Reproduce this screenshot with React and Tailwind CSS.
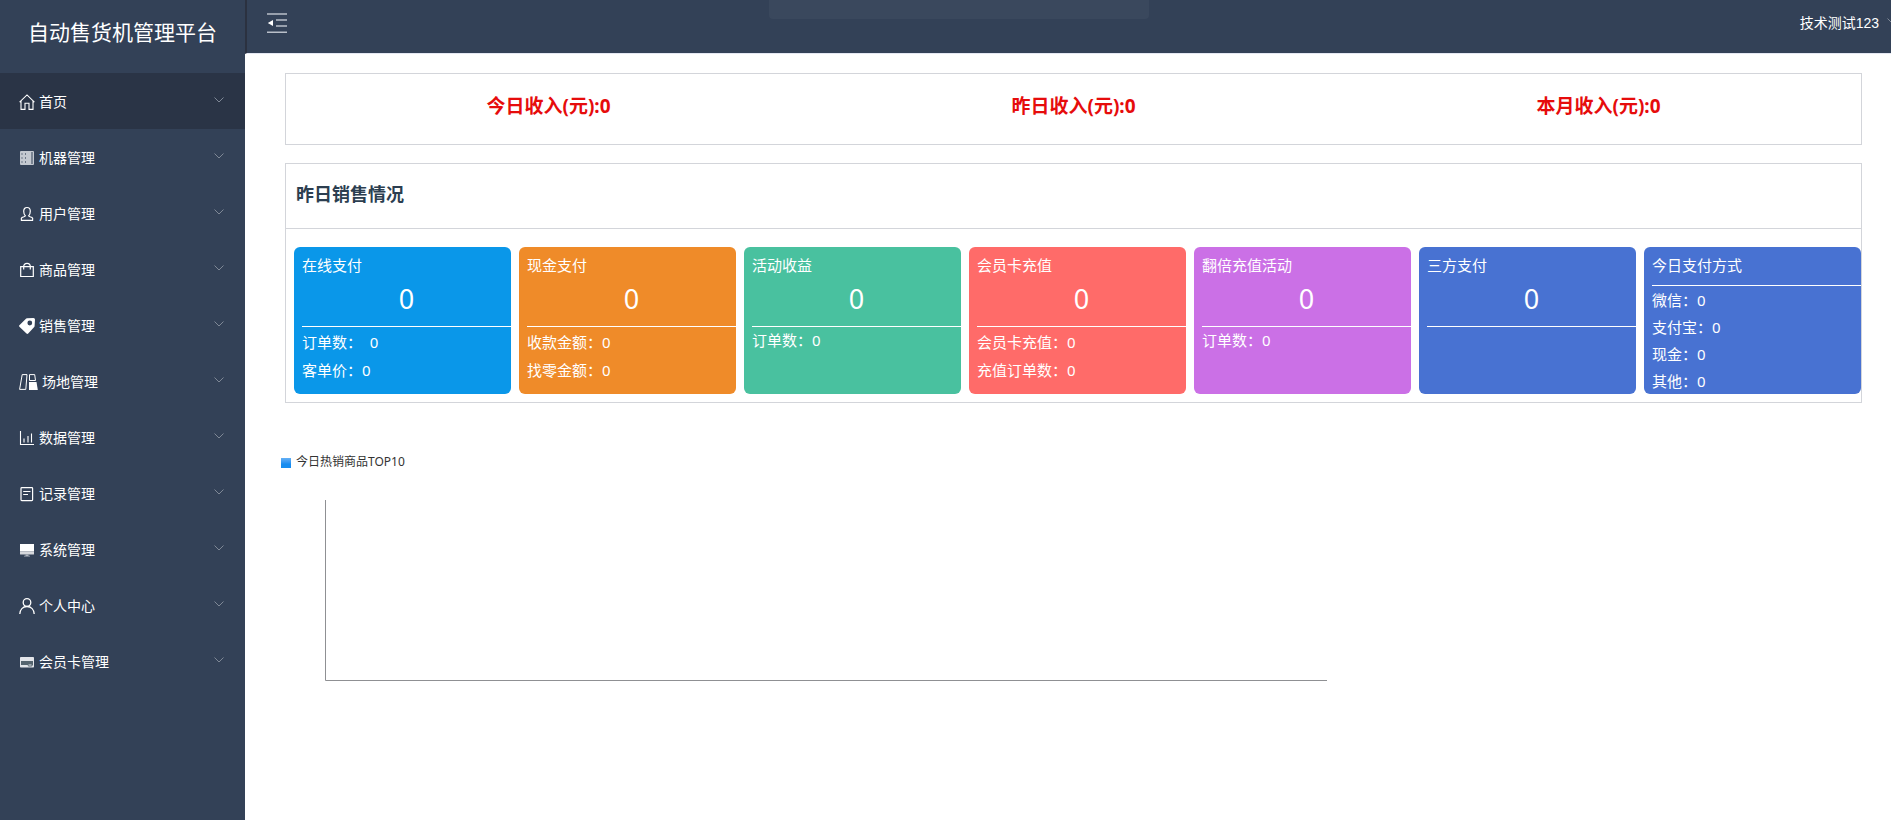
const svgProps = { viewBox: "0 0 16 16", width: 16, height: 16, fill: "none", stroke: "currentColor", "aria-hidden": true, className: "h-4 w-4 shrink-0" };

function HomeIcon() {
  return (
    <svg {...svgProps} strokeWidth="1.1">
      <path d="M.6 8.2 8 .9l7.4 7.3M2 7v8.4h4V9.2h4v6.2h4V7" />
    </svg>
  );
}
function MachineIcon() {
  return (
    <svg {...svgProps} stroke="none">
      <rect x="1" y="1" width="14" height="14" rx="1" fill="#c3c8d0" />
      <path d="M12.5 2h1v12h-1z" fill="#334157" />
      <path d="M2.5 3h1v2h-1zM2.5 7h1v2h-1zM2.5 11h1v2h-1zM6 3h1v2H6zM6 7h1v2H6zM6 11h1v2H6z" fill="#6e7888" />
    </svg>
  );
}
function StampUserIcon() {
  return (
    <svg {...svgProps} strokeWidth="1.2">
      <path d="M6.4 9.8C5 8.400 4.700 6.800 4.700 5.200 4.700 3 6 1.500 8 1.500s3.300 1.500 3.300 3.700c0 1.600-.3 3.200-1.700 4.600.3.900 1.600 1 3.200 1.600 1 .4 1.100 1.700.8 3H2.400c-.3-1.300-.2-2.600.8-3 1.600-.6 2.900-.7 3.200-1.600z" />
    </svg>
  );
}
function BagIcon() {
  return (
    <svg {...svgProps} strokeWidth="1.2">
      <path d="M1.700 4.600h12.600v9.900H1.700zM4.700 7.400V4.600C4.700 2.600 6 1.400 8 1.400s3.300 1.200 3.300 3.200v2.800" />
    </svg>
  );
}
function TagIcon() {
  return (
    <svg {...svgProps} stroke="none">
      <path fill="currentColor" fillRule="evenodd" d="M8 .3 14.500 0q1.500 0 1.500 1.500L15.600 8a2 2 0 0 1-.6 1.300l-5.800 6.200a1.200 1.200 0 0 1-1.700 0L.4 8.700a1 1 0 0 1 0-1.400L6.700.9A2 2 0 0 1 8 .3zM10.800 2.600a2.400 2.400 0 1 0 0 4.800 2.400 2.400 0 0 0 0-4.800z" />
    </svg>
  );
}
function PlaceIcon() {
  return (
    <svg viewBox="0 0 19 16" width="19" height="16" fill="none" stroke="currentColor" aria-hidden="true" className="h-4 w-[19px] shrink-0">
      <path d="M3.200.6H8L6.800 15.400H.6zM10.500.6h5.200l.8 5.900h-6z" />
      <path d="M10 8h7.500l1.300 8H10z" fill="currentColor" stroke="none" />
    </svg>
  );
}
function DataIcon() {
  return (
    <svg {...svgProps} strokeWidth="1.100">
      <path d="M1.500 1v13.500H15M5 8.500v4M9 6v6.500M12.500 3.500v9" />
    </svg>
  );
}
function RecordIcon() {
  return (
    <svg {...svgProps} strokeWidth="1.200">
      <rect x="2" y="1.600" width="11.600" height="13" rx=".8" />
      <path d="M4.200 5.500h7.300M4.200 8.500h4.800" />
    </svg>
  );
}
function MonitorIcon() {
  return (
    <svg {...svgProps} stroke="none">
      <path d="M1 2h14v7.500H1z" fill="#fff" />
      <path d="M1 9.500h14V12q0 .5-.5.5h-13Q1 12.500 1 12z" fill="#d5d7dc" />
      <path d="M6.500 12.500h3v1.200H11v.8H5v-.8h1.500z" fill="#aeb4be" />
    </svg>
  );
}
function PersonIcon() {
  return (
    <svg {...svgProps} strokeWidth="1.300">
      <circle cx="8" cy="4.500" r="3.800" />
      <path d="M.8 16c.2-4.400 3-7.500 7.200-7.500s7 3.100 7.200 7.500" />
    </svg>
  );
}
function CardIcon() {
  return (
    <svg {...svgProps} stroke="none">
      <rect x="1" y="3" width="14" height="10.500" rx=".8" fill="#e3e5ea" />
      <path d="M2 7h12v4l-1.500 1.500h-3L8.500 11H2z" fill="#55646f" />
      <path d="M9.500 10.500h3v1h-3z" fill="#e3e5ea" />
    </svg>
  );
}
function Chevron() {
  return (
    <svg viewBox="0 0 10 6" width="10" height="6" fill="none" stroke="currentColor" aria-hidden="true" className="mb-1 h-1.5 w-2.5 shrink-0 text-[#7f8896]">
      <path d="m.5.5 4.500 4.500L9.500.5" />
    </svg>
  );
}

const menu = [
  { label: "首页", Icon: HomeIcon, active: true },
  { label: "机器管理", Icon: MachineIcon },
  { label: "用户管理", Icon: StampUserIcon },
  { label: "商品管理", Icon: BagIcon },
  { label: "销售管理", Icon: TagIcon },
  { label: "场地管理", Icon: PlaceIcon },
  { label: "数据管理", Icon: DataIcon },
  { label: "记录管理", Icon: RecordIcon },
  { label: "系统管理", Icon: MonitorIcon },
  { label: "个人中心", Icon: PersonIcon },
  { label: "会员卡管理", Icon: CardIcon },
];

const incomes = ["今日收入(元):0", "昨日收入(元):0", "本月收入(元):0"];

const cards = [
  { title: "在线支付", color: "bg-[#0a97e9]", total: "0", rows: ["订单数：  0", "客单价：0"] },
  { title: "现金支付", color: "bg-[#ef8b29]", total: "0", rows: ["收款金额：0", "找零金额：0"] },
  { title: "活动收益", color: "bg-[#49c19f]", total: "0", rows: ["订单数：0"] },
  { title: "会员卡充值", color: "bg-[#ff6b69]", total: "0", rows: ["会员卡充值：0", "充值订单数：0"] },
  { title: "翻倍充值活动", color: "bg-[#cb70e6]", total: "0", rows: ["订单数：0"] },
  { title: "三方支付", color: "bg-[#4872d2]", total: "0", rows: [] },
  { title: "今日支付方式", color: "bg-[#4872d2]", rows: ["微信：0", "支付宝：0", "现金：0", "其他：0"] },
];

function StatCard({ title, color, total, rows }) {
  const rowHeight = total === undefined ? "leading-[27px]" : rows.length > 1 ? "leading-7" : "leading-6";
  return (
    <article className={`h-[147px] min-w-0 flex-1 rounded-md pl-2 pt-1 text-[15px] text-white ${color}`}>
      <h3 className="h-[30px] leading-7">{title}</h3>
      {total !== undefined && <p className="h-[41px] text-center text-[27px] leading-9">{total}</p>}
      <div className="mt-1 border-t border-white pt-px">
        {rows.map((row) => (
          <p key={row} className={`whitespace-pre ${rowHeight}`}>{row}</p>
        ))}
      </div>
    </article>
  );
}

export default function App() {
  return (
    <div className="flex min-h-screen bg-white font-['Noto_Sans','Noto_Sans_CJK_SC',sans-serif]">
      <aside className="w-[245px] shrink-0 bg-[#334157] text-white">
        <h1 className="h-[73px] pt-3 text-center text-[21px] leading-10">自动售货机管理平台</h1>
        <nav>
          {menu.map(({ label, Icon, active }) => (
            <a
              key={label}
              href="#"
              className={`flex h-14 items-center gap-1 pl-[19px] pr-[21px] pt-0.5 text-sm ${active ? "bg-[#2a3446]" : ""}`}
            >
              <Icon />
              <span className="flex-1">{label}</span>
              <Chevron />
            </a>
          ))}
        </nav>
      </aside>
      <div className="flex min-w-0 flex-1 flex-col">
        <header className="relative flex h-[54px] items-start justify-between overflow-hidden border-b border-l-2 border-b-[#e4e7f2] border-l-[#2b3140] bg-[#334157]">
          <button type="button" aria-label="折叠菜单" className="ml-5 mt-3 text-[#b9bfc9]">
            <svg viewBox="0 0 20 22" width="20" height="22" fill="none" stroke="currentColor" strokeWidth="1.500" aria-hidden="true">
              <path d="M0 2h20M9 8h11M9 14h11M0 20.300h20" />
              <path d="M6 8v6L.8 11z" fill="#fff" stroke="none" />
            </svg>
          </button>
          <div className="absolute left-[522px] top-0 h-[19px] w-[380px] rounded-b bg-[#3a485d]" />
          <button type="button" className="-mr-1.5 flex items-center gap-2 pt-3 font-['Liberation_Sans','Noto_Sans_CJK_SC',sans-serif] text-sm leading-[22px] text-white">
            技术测试123
            <Chevron />
          </button>
        </header>
        <main className="pb-4 pl-10 pr-[29px] pt-[19px]">
          <section className="flex h-[72px] items-start border border-[#d3d5da] pt-4 text-[19px] font-bold leading-8 text-[#e60c0c]">
            {incomes.map((text) => (
              <p key={text} className="flex-1 text-center">{text}</p>
            ))}
          </section>
          <section className="mt-[18px] border border-[#d3d5da]">
            <h2 className="h-[65px] border-b border-[#d3d5da] pl-2.5 pt-4 text-lg font-bold leading-7 text-[#2c3e50]">昨日销售情况</h2>
            <div className="flex gap-2 pb-2 pl-2 pt-[18px]">
              {cards.map((card) => (
                <StatCard key={card.title} {...card} />
              ))}
            </div>
          </section>
          <section className="pt-[49px]">
            <h2 className="-ml-1 flex items-center gap-[5px] text-xs leading-5 text-[#333]">
              <span className="mt-0.5 h-2.5 w-2.5 bg-linear-to-b from-[#63b0f5] to-[#188df0] to-60%" />
              今日热销商品TOP10
            </h2>
            <svg viewBox="0 0 1002 182" width="1002" height="182" className="ml-10 mt-[27px]" role="img" aria-label="今日热销商品TOP10" fill="none" stroke="#8f9093">
              <path d="M.5 1v180.500H1002" />
            </svg>
          </section>
        </main>
      </div>
    </div>
  );
}
